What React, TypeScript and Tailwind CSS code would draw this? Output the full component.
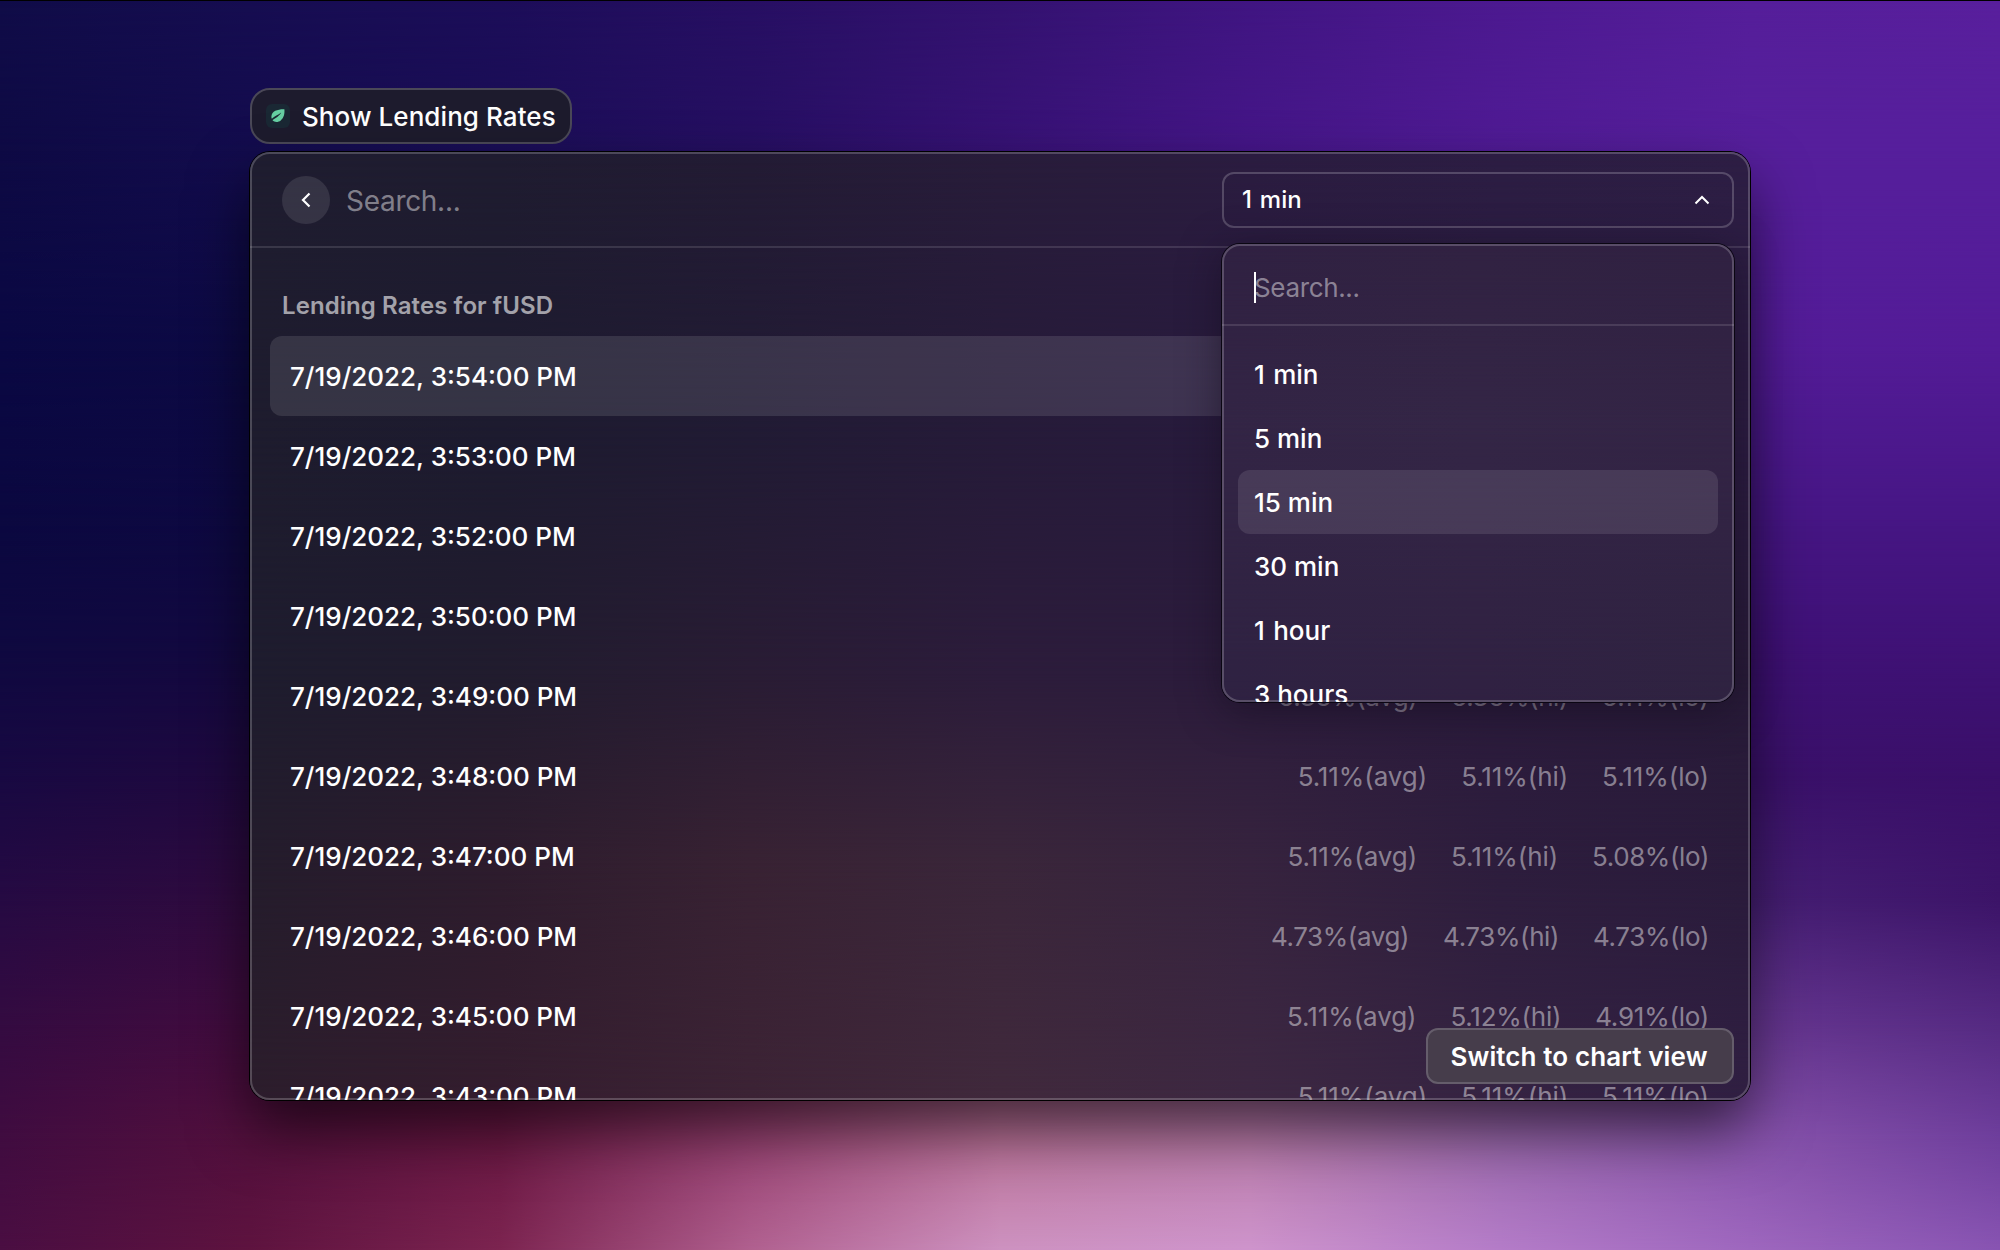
const rows: [string, string, string, string][] = [
  ["7/19/2022, 3:54:00 PM", "5.11%", "5.11%", "5.11%"],
  ["7/19/2022, 3:53:00 PM", "5.11%", "5.11%", "5.11%"],
  ["7/19/2022, 3:52:00 PM", "5.11%", "5.11%", "5.11%"],
  ["7/19/2022, 3:50:00 PM", "5.11%", "5.11%", "5.11%"],
  ["7/19/2022, 3:49:00 PM", "5.36%", "5.36%", "5.11%"],
  ["7/19/2022, 3:48:00 PM", "5.11%", "5.11%", "5.11%"],
  ["7/19/2022, 3:47:00 PM", "5.11%", "5.11%", "5.08%"],
  ["7/19/2022, 3:46:00 PM", "4.73%", "4.73%", "4.73%"],
  ["7/19/2022, 3:45:00 PM", "5.11%", "5.12%", "4.91%"],
  ["7/19/2022, 3:43:00 PM", "5.11%", "5.11%", "5.11%"],
];

const options = ["1 min", "5 min", "15 min", "30 min", "1 hour", "3 hours"];

type Band = { y: number; colors: string[] };

// Bands of a mesh gradient: each holds evenly spaced colours at height y (percent).
const wallpaper: Band[] = [
  { y: 0, colors: ["#100c48", "#160d51", "#1c0d59", "#270f63", "#331270", "#401582", "#4c1990", "#551e9a", "#591f9d"] },
  { y: 12, colors: ["#0e0a44", "#130c4d", "#1a0e56", "#260f62", "#371275", "#451688", "#501b95", "#561f9c", "#561f9c"] },
  { y: 28, colors: ["#0a0843", "#0d0a44", "#140848", "#220c56", "#34106c", "#44147e", "#4e1990", "#531c98", "#531b96"] },
  { y: 42, colors: ["#0b0840", "#0e0942", "#12083e", "#1c0848", "#280c54", "#380f68", "#421280", "#461684", "#461684"] },
  { y: 52, colors: ["#0f0940", "#130940", "#18063a", "#220844", "#2c0c52", "#380f64", "#3e1174", "#3f1176", "#3f1276"] },
  { y: 62, colors: ["#180942", "#20093f", "#260a3c", "#300c44", "#380f58", "#3c1068", "#3c126c", "#3a116a", "#3a0f69"] },
  { y: 72, colors: ["#260a43", "#300b3e", "#3c0d3e", "#501848", "#602c60", "#542870", "#4c2274", "#461f74", "#3c1468"] },
  { y: 82, colors: ["#340b41", "#420c3e", "#561140", "#7a2858", "#98507c", "#905590", "#744090", "#663690", "#552a82"] },
  { y: 91, colors: ["#400c40", "#53103d", "#6a1843", "#984272", "#ba7298", "#b87aa8", "#9a68ac", "#8753ab", "#6e3e9c"] },
  { y: 100, colors: ["#4a0e42", "#5e133f", "#7c2450", "#b0608f", "#cd92c0", "#ce94cc", "#b47cc8", "#9e67be", "#8854b2"] },
];

const panelMesh: Band[] = [
  { y: 0, colors: ["#1f1d30", "#1f1c30", "#231b34", "#281c3a", "#2b1c40", "#2c1d43", "#2d1e44"] },
  { y: 30, colors: ["#1e1c2e", "#1d1b2f", "#211b34", "#261b39", "#281b3d", "#2b1c41", "#2c1c42"] },
  { y: 55, colors: ["#1e1c2e", "#211c2e", "#291c34", "#2c1c3b", "#2c1c3c", "#2b1b3c", "#281b38"] },
  { y: 75, colors: ["#241c2c", "#2d1c2d", "#382233", "#3a263a", "#36233e", "#2d1d3d", "#2a1b3b"] },
  { y: 100, colors: ["#2c1d2c", "#341d2e", "#3c2335", "#40293c", "#3d2842", "#352342", "#301f42"] },
];

const menuMesh: Band[] = [
  { y: 0, colors: ["#302142", "#312242", "#302142"] },
  { y: 40, colors: ["#332545", "#342646", "#332445"] },
  { y: 100, colors: ["#2f2242", "#302142", "#2f2341"] },
];

function Mesh({ bands }: { bands: Band[] }) {
  return (
    <div className="pointer-events-none absolute inset-0 -z-10 overflow-hidden rounded-[inherit]">
      {bands.map((band, i) => {
        const mask = i === 0 ? undefined : `linear-gradient(to bottom, transparent ${bands[i - 1].y}%, black ${band.y}%)`;
        return (
          <div
            key={band.y}
            className="absolute inset-0"
            style={{ backgroundImage: `linear-gradient(to right, ${band.colors.join(", ")})`, maskImage: mask }}
          />
        );
      })}
    </div>
  );
}

function Rate({ value, label }: { value: string; label: string }) {
  const tracking = value === "5.11%" ? "tracking-[-0.08px]" : value.includes("1") ? "tracking-[-0.25px]" : "tracking-[-0.4px]";
  return (
    <span className={tracking}>
      {value}({label})
    </span>
  );
}

function LeafIcon() {
  return (
    <span className="flex size-6 items-center justify-center rounded-md bg-[#1a2834]">
      <svg viewBox="0 0 24 24" className="size-6">
        <path d="M18.400 5.200C12 5 5.800 6.800 5.400 12.400c0 .9.100 1.700.4 2.300C8.600 12.200 12 11.200 15.200 8.600 13 12.600 9.800 13.800 6.500 16.200c2.200 2.500 6 2 8.200.2C18 13.600 18.800 9.600 18.400 5.200Z" fill="#66cfa3" />
      </svg>
    </span>
  );
}

function DurationMenu() {
  return (
    <div className="absolute top-[72px] right-0 isolate h-[458px] w-[512px] rounded-[18px] shadow-[0_0_0_1px_#0a0612,0_8px_40px_rgba(20,14,30,0.6)]">
      <Mesh bands={menuMesh} />
      <div className="h-full overflow-hidden rounded-[18px]">
        <div className="flex h-[82px] items-center border-b-2 border-white/12 pt-1.5 pl-8 text-[26px] text-white/45">
          <span className="h-[31px] w-0.5 bg-white" />
          <span className="-ml-0.5 tracking-[-0.35px]">Search...</span>
        </div>
        <ul className="flex flex-col px-4 pt-4">
          {options.map((option) => (
            <li
              key={option}
              className={`flex h-16 shrink-0 items-center rounded-xl pl-4 text-[26px] font-medium text-white ${option === "15 min" ? "bg-white/10" : ""} ${option.startsWith("1 ") ? "[word-spacing:1.5px]" : ""}`}
            >
              {option}
            </li>
          ))}
        </ul>
      </div>
      <div className="pointer-events-none absolute inset-0 rounded-[18px] border-2 border-white/20" />
    </div>
  );
}

export default function App() {
  return (
    <main className="relative isolate h-[1250px] w-[2000px] overflow-hidden border-t border-black pt-[87px] pl-[250px] font-['Inter',sans-serif] text-white">
      <Mesh bands={wallpaper} />

      <div className="flex h-14 w-[322px] items-center gap-3 rounded-[20px] border-2 border-[#4a4857] bg-[#1d1b2d] pl-3.5 text-[26px] font-medium">
        <LeafIcon />
        <span className="tracking-[0.07px] whitespace-nowrap">Show Lending Rates</span>
      </div>

      <section className="relative isolate mt-2 h-[948px] w-[1500px] rounded-[20px] shadow-[0_0_0_1px_#000,0_30px_60px_rgba(0,0,0,0.6)]">
        <Mesh bands={panelMesh} />
        <div className="flex h-full flex-col overflow-hidden rounded-[20px]">
          <header className="flex h-24 shrink-0 items-center border-b-2 border-white/12 pt-0.5 pr-4 pl-8">
            <button className="flex size-12 items-center justify-center rounded-full bg-white/10">
              <svg viewBox="0 0 10 16" className="h-4 w-2.5" fill="none" stroke="white" strokeWidth="2.2">
                <path d="M8.500 1.500 2 8l6.500 6.500" />
              </svg>
            </button>
            <span className="mt-0.5 ml-4 text-[28px] tracking-[-0.3px] text-white/45">Search...</span>
          </header>

          <div className="flex min-h-0 grow flex-col overflow-hidden px-5">
            <h2 className="mt-[43px] ml-3 h-[45px] shrink-0 text-2xl leading-[30px] font-semibold tracking-[0.08px] text-white/60">
              Lending Rates for fUSD
            </h2>
            {rows.map(([time, avg, hi, lo], i) => (
              <div
                key={time}
                className={`flex h-20 shrink-0 items-center justify-between rounded-xl pr-[21px] pl-5 text-[26px] ${i === 0 ? "bg-white/11" : ""}`}
              >
                <span className="font-medium">{time}</span>
                <span className="flex gap-[34px] text-white/45">
                  <Rate value={avg} label="avg" />
                  <Rate value={hi} label="hi" />
                  <Rate value={lo} label="lo" />
                </span>
              </div>
            ))}
          </div>
        </div>
        <div className="pointer-events-none absolute inset-0 rounded-[20px] border-2 border-white/20" />

        <div className="absolute top-5 right-4 w-[512px]">
          <button className="flex h-14 w-full items-center justify-between rounded-xl border-2 border-white/20 pr-[22px] pl-[18px] text-2xl font-medium [word-spacing:1.5px]">
            1 min
            <svg viewBox="0 0 16 10" className="h-2.5 w-4" fill="none" stroke="white" strokeWidth="2">
              <path d="M1.500 8.500 8 2l6.500 6.500" />
            </svg>
          </button>
          <DurationMenu />
        </div>

        <button className="absolute right-4 bottom-4 flex h-14 w-[308px] items-center justify-center rounded-xl border-2 border-[#655d6b] bg-[#463d4b] pr-0.5 text-[26px] font-semibold tracking-[0.12px]">
          Switch to chart view
        </button>
      </section>
    </main>
  );
}
